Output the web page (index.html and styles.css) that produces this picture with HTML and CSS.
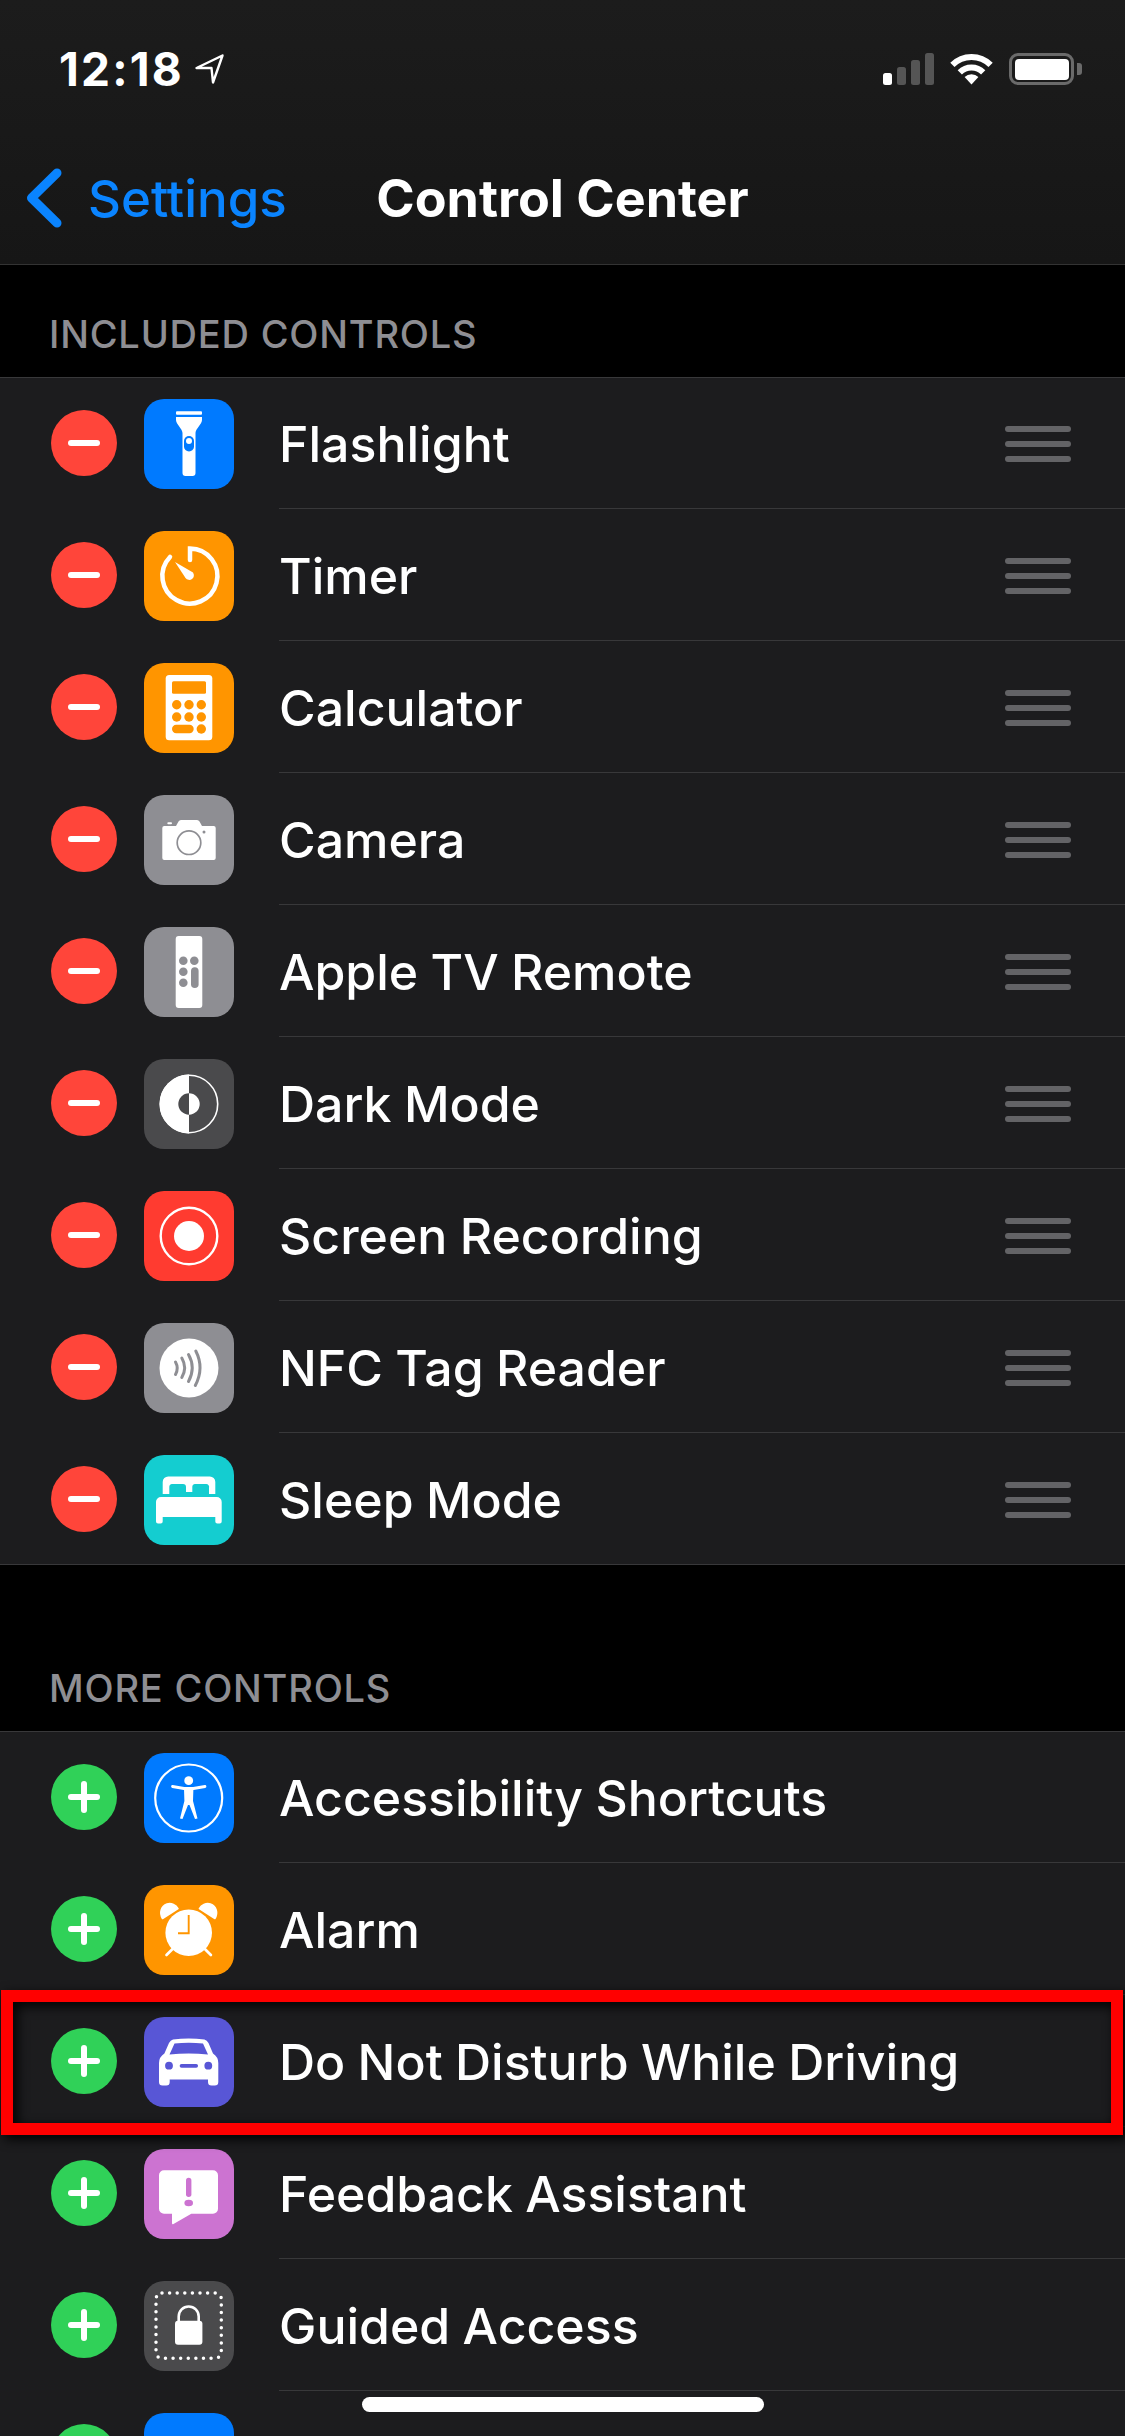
FILE: index.html
```html
<!DOCTYPE html>
<html lang="en">
<head>
    <meta charset="UTF-8">
    <meta name="viewport" content="width=device-width, initial-scale=1.0">
    <title>Control Center</title>
    <link rel="stylesheet" href="styles.css">
</head>
<body>
    <div class="page">
        <header class="top-bar">
            <div class="status-bar">
                <div class="status-left">
                    <span class="time">12:18</span>
                    <svg class="status-arrow" width="32" height="32" viewBox="0 0 32 32"><path d="M28.500 2.500 2.500 15h15l1.500 14.500z" fill="none" stroke="#fff" stroke-width="2.400" stroke-linejoin="round"/></svg>
                </div>
                <div class="status-right">
                    <svg width="51" height="32" viewBox="0 0 51 32">
                        <rect x="0" y="20" width="9" height="12" rx="2.500" fill="#fff"/>
                        <rect x="14" y="14" width="9" height="18" rx="2.500" fill="#555"/>
                        <rect x="28" y="7" width="9" height="25" rx="2.500" fill="#555"/>
                        <rect x="42" y="0" width="9" height="32" rx="2.500" fill="#555"/>
                    </svg>
                    <svg width="45" height="32" viewBox="0 0 45 32">
                        <path d="M3.400 11.900A27 27 0 0 1 41.600 11.900M10.800 19.300A16.500 16.500 0 0 1 34.200 19.300" fill="none" stroke="#fff" stroke-width="6"/>
                        <path d="M22.500 31.500 15.600 24.100A9.700 9.700 0 0 1 29.400 24.100z" fill="#fff"/>
                    </svg>
                    <div class="battery">
                        <div class="battery-body"><div class="battery-fill"></div></div>
                        <div class="battery-nub"></div>
                    </div>
                </div>
            </div>
            <nav class="nav-bar">
                <a class="back-link">
                    <svg width="36" height="60" viewBox="0 0 36 60"><path d="M31 5 5.500 30 31 55" fill="none" stroke="#0a84ff" stroke-width="9" stroke-linecap="round" stroke-linejoin="round"/></svg>
                    <span>Settings</span>
                </a>
                <h1 class="nav-title">Control Center</h1>
            </nav>
        </header>

        <h2 class="section-title">INCLUDED CONTROLS</h2>
        <section class="group">
            <div class="row">
                <div class="round-btn minus"></div>
                <div class="icon blue">
                    <svg viewBox="0 0 90 90">
                        <rect x="32" y="12.300" width="26" height="3.400" rx="1" fill="#fff"/>
                        <path d="M32 18H58V21C58 25 51.500 30 51.500 34V74A3 3 0 0 1 48.500 77H41.500A3 3 0 0 1 38.500 74V34C38.500 30 32 25 32 21z" fill="#fff"/>
                        <rect x="40" y="37" width="10" height="15.500" rx="5" fill="#007aff"/>
                        <circle cx="45" cy="42" r="3" fill="#fff"/>
                    </svg>
                </div>
                <div class="row-body"><span class="row-label">Flashlight</span><div class="handle"><i></i><i></i><i></i></div></div>
            </div>
            <div class="row">
                <div class="round-btn minus"></div>
                <div class="icon orange">
                    <svg viewBox="0 0 90 90">
                        <path d="M46 29V17.500A27.500 27.500 0 1 1 26 26" fill="none" stroke="#fff" stroke-width="4.500" stroke-linecap="round"/>
                        <path d="M31 31 49 41.500A4.500 4.500 0 1 1 41.500 47z" fill="#fff"/>
                    </svg>
                </div>
                <div class="row-body"><span class="row-label">Timer</span><div class="handle"><i></i><i></i><i></i></div></div>
            </div>
            <div class="row">
                <div class="round-btn minus"></div>
                <div class="icon orange">
                    <svg viewBox="0 0 90 90">
                        <rect x="21.700" y="12" width="46.600" height="65.300" rx="3.500" fill="#fff"/>
                        <g fill="#ff9500">
                            <rect x="28" y="18.300" width="34" height="12.400" rx="1.500"/>
                            <circle cx="32.700" cy="41.700" r="4.700"/><circle cx="45" cy="41.700" r="4.700"/><circle cx="57.300" cy="41.700" r="4.700"/>
                            <circle cx="32.700" cy="54" r="4.700"/><circle cx="45" cy="54" r="4.700"/><circle cx="57.300" cy="54" r="4.700"/>
                            <rect x="28" y="61.800" width="21.700" height="8.400" rx="4.200"/><circle cx="57.300" cy="66" r="4.700"/>
                        </g>
                    </svg>
                </div>
                <div class="row-body"><span class="row-label">Calculator</span><div class="handle"><i></i><i></i><i></i></div></div>
            </div>
            <div class="row">
                <div class="round-btn minus"></div>
                <div class="icon gray">
                    <svg viewBox="0 0 90 90">
                        <path d="M20.300 31H32L34.500 26.500Q35.300 25 37 25H53Q54.700 25 55.500 26.500L58 31H69.700A2 2 0 0 1 71.700 33V63A2 2 0 0 1 69.700 65H20.300A2 2 0 0 1 18.300 63V33A2 2 0 0 1 20.300 31z" fill="#fff"/>
                        <rect x="23.300" y="27.300" width="4.700" height="2" rx="1" fill="#fff"/>
                        <circle cx="45" cy="47.700" r="11.800" fill="#fff" stroke="#8e8e93" stroke-width="1.700"/>
                        <circle cx="60" cy="37" r="1.500" fill="#8e8e93"/>
                    </svg>
                </div>
                <div class="row-body"><span class="row-label">Camera</span><div class="handle"><i></i><i></i><i></i></div></div>
            </div>
            <div class="row">
                <div class="round-btn minus"></div>
                <div class="icon gray">
                    <svg viewBox="0 0 90 90">
                        <rect x="31.700" y="9" width="26.600" height="72" rx="3" fill="#fff"/>
                        <g fill="#8e8e93">
                            <circle cx="39.300" cy="33.700" r="4.300"/><circle cx="50.300" cy="33.700" r="4.300"/>
                            <circle cx="39.300" cy="44.700" r="4.300"/><circle cx="39.300" cy="55.700" r="4.300"/>
                            <rect x="47" y="40.300" width="7.600" height="20.700" rx="3.800"/>
                        </g>
                    </svg>
                </div>
                <div class="row-body"><span class="row-label">Apple TV Remote</span><div class="handle"><i></i><i></i><i></i></div></div>
            </div>
            <div class="row">
                <div class="round-btn minus"></div>
                <div class="icon dark">
                    <svg viewBox="0 0 90 90">
                        <path d="M45 15.500A29.500 29.500 0 0 0 45 74.500z" fill="#fff"/>
                        <circle cx="45" cy="45" r="28.700" fill="none" stroke="#fff" stroke-width="1.600"/>
                        <path d="M45 34.300A10.700 10.700 0 0 0 45 55.700z" fill="#4a4a4c"/>
                        <path d="M45 34.300A10.700 10.700 0 0 1 45 55.700z" fill="#fff"/>
                    </svg>
                </div>
                <div class="row-body"><span class="row-label">Dark Mode</span><div class="handle"><i></i><i></i><i></i></div></div>
            </div>
            <div class="row">
                <div class="round-btn minus"></div>
                <div class="icon red">
                    <svg viewBox="0 0 90 90">
                        <circle cx="45" cy="45" r="28.300" fill="none" stroke="#fff" stroke-width="2.400"/>
                        <circle cx="45" cy="45" r="15" fill="#fff"/>
                    </svg>
                </div>
                <div class="row-body"><span class="row-label">Screen Recording</span><div class="handle"><i></i><i></i><i></i></div></div>
            </div>
            <div class="row">
                <div class="round-btn minus"></div>
                <div class="icon gray">
                    <svg viewBox="0 0 90 90">
                        <circle cx="45" cy="45" r="29.500" fill="#fff"/>
                        <path d="M31.500 39Q35 45.300 31.500 51.500M37.800 35Q43.500 44.700 37.800 54.500M44.500 31.500Q52 44.700 44.500 58.500M51.800 28Q60.500 45 51.300 62.500" fill="none" stroke="#8e8e93" stroke-width="3" stroke-linecap="round"/>
                    </svg>
                </div>
                <div class="row-body"><span class="row-label">NFC Tag Reader</span><div class="handle"><i></i><i></i><i></i></div></div>
            </div>
            <div class="row">
                <div class="round-btn minus"></div>
                <div class="icon teal">
                    <svg viewBox="0 0 90 90">
                        <path d="M18.700 39V27A5.500 5.500 0 0 1 24.200 21.500H65.800A5.500 5.500 0 0 1 71.300 27V39H65V33A3 3 0 0 0 62 29H51A3 3 0 0 0 48.300 32V37H42V32A3 3 0 0 0 39 29H28A3 3 0 0 0 25.300 32V39z" fill="#fff"/>
                        <path d="M12 47A5 5 0 0 1 17 42H72.700A5 5 0 0 1 77.700 47V66.500A2 2 0 0 1 75.700 68.500H73.300A2 2 0 0 1 71.300 66.500V62H18.700V66.500A2 2 0 0 1 16.700 68.500H14A2 2 0 0 1 12 66.500z" fill="#fff"/>
                    </svg>
                </div>
                <div class="row-body"><span class="row-label">Sleep Mode</span><div class="handle"><i></i><i></i><i></i></div></div>
            </div>
        </section>

        <h2 class="section-title section-gap">MORE CONTROLS</h2>
        <section class="group">
            <div class="row">
                <div class="round-btn plus"></div>
                <div class="icon blue">
                    <svg viewBox="0 0 90 90">
                        <circle cx="44.700" cy="45" r="33.500" fill="none" stroke="#fff" stroke-width="2.200"/>
                        <circle cx="44.700" cy="27.700" r="4.400" fill="#fff"/>
                        <path d="M28.500 33.500 40 35.500H49.400L61 33.500" fill="none" stroke="#fff" stroke-width="2.800" stroke-linecap="round" stroke-linejoin="round"/>
                        <path d="M40 35.500H49.400L49 48 53.500 65.500 51 66 45.500 52H44L38.500 66 36 65.500 40.400 48z" fill="#fff"/>
                    </svg>
                </div>
                <div class="row-body"><span class="row-label">Accessibility Shortcuts</span></div>
            </div>
            <div class="row">
                <div class="round-btn plus"></div>
                <div class="icon orange">
                    <svg viewBox="0 0 90 90">
                        <path d="M18.500 33.500C15 28 17 21 23 19C27.500 17.700 32 20 34 23.500z" fill="#fff" stroke="#fff" stroke-width="1.500" stroke-linejoin="round"/>
                        <path d="M70.900 33.500C74.400 28 72.400 21 66.400 19C61.900 17.700 57.400 20 55.400 23.500z" fill="#fff" stroke="#fff" stroke-width="1.500" stroke-linejoin="round"/>
                        <circle cx="44.700" cy="47.700" r="23.300" fill="#fff"/>
                        <path d="M44.700 30V48.300H34" fill="none" stroke="#ff9500" stroke-width="1.900"/>
                        <path d="M22.500 70 28.300 64.300M66.900 70 61.100 64.300" fill="none" stroke="#fff" stroke-width="2.700" stroke-linecap="round"/>
                    </svg>
                </div>
                <div class="row-body"><span class="row-label">Alarm</span></div>
            </div>
            <div class="row">
                <div class="round-btn plus"></div>
                <div class="icon indigo">
                    <svg viewBox="0 0 90 90">
                        <path d="M29 22.500Q44.700 20.500 60.400 22.500Q63 23 64.500 26L69 36.500Q74.300 40 74.300 46V65A3.500 3.500 0 0 1 70.800 68.500H67.500A3.500 3.500 0 0 1 64 65V62.500H25.700V65A3.500 3.500 0 0 1 22.200 68.500H18.500A3.500 3.500 0 0 1 15 65V46Q15 40 20.400 36.500L25 26Q26.500 23 29 22.500z" fill="#fff"/>
                        <path d="M30.500 26.500Q44.700 25 59 26.500L64 37.500Q44.700 35.500 25.500 37.500z" fill="#5856d6"/>
                        <circle cx="25" cy="48.700" r="3.900" fill="#5856d6"/>
                        <circle cx="64.300" cy="48.700" r="3.900" fill="#5856d6"/>
                        <rect x="35.700" y="47" width="18.300" height="3.700" rx="1.800" fill="#5856d6"/>
                    </svg>
                </div>
                <div class="row-body"><span class="row-label">Do Not Disturb While Driving</span></div>
                <div class="highlight"></div>
            </div>
            <div class="row">
                <div class="round-btn plus"></div>
                <div class="icon purple">
                    <svg viewBox="0 0 90 90">
                        <path d="M20 21.300H69A5 5 0 0 1 74 26.300V59.700A5 5 0 0 1 69 64.700H47.300L29.500 75Q28 75.800 28 74V64.700H20A5 5 0 0 1 15 59.700V26.300A5 5 0 0 1 20 21.300z" fill="#fff"/>
                        <rect x="42" y="28.700" width="5.400" height="19.300" rx="2.700" fill="#cc73d1"/>
                        <ellipse cx="44.700" cy="54" rx="4.300" ry="3.200" fill="#cc73d1"/>
                    </svg>
                </div>
                <div class="row-body"><span class="row-label">Feedback Assistant</span></div>
            </div>
            <div class="row">
                <div class="round-btn plus"></div>
                <div class="icon dark">
                    <svg viewBox="0 0 90 90">
                        <rect x="12" y="12" width="65.300" height="65.300" rx="6" fill="none" stroke="#fff" stroke-width="3.500" stroke-linecap="round" stroke-dasharray="0 7.600"/>
                        <path d="M34.700 41V35.500A10 10 0 0 1 54.700 35.500V41" fill="none" stroke="#fff" stroke-width="2.600"/>
                        <rect x="31" y="39.700" width="27.400" height="24" rx="3" fill="#fff"/>
                    </svg>
                </div>
                <div class="row-body"><span class="row-label">Guided Access</span></div>
            </div>
            <div class="row">
                <div class="round-btn plus"></div>
                <div class="icon blue">
                    <svg viewBox="0 0 90 90">
                        <path d="M28 38A17.500 17.500 0 0 1 62 38C62 48 52 50 52 60" fill="none" stroke="#fff" stroke-width="3.200" stroke-linecap="round"/>
                    </svg>
                </div>
                <div class="row-body"></div>
            </div>
        </section>

        <div class="home-indicator"></div>
    </div>
</body>
</html>
```

FILE: styles.css
```css
* {
    margin: 0;
    padding: 0;
    box-sizing: border-box;
}

body {
    background-color: #000;
    font-family: 'Inter', 'Liberation Sans', sans-serif;
    color: #fff;
}

.page {
    position: relative;
    width: 1125px;
    height: 2436px;
    overflow: hidden;
}

/* Status bar and navigation */
.top-bar {
    background: linear-gradient(180deg, #1c1c1c 0%, #161616 100%);
    border-bottom: 1px solid #333;
    height: 265px;
}

.status-bar {
    height: 132px;
    display: flex;
    justify-content: space-between;
    padding: 52px 43px 0 59px;
}

.status-left {
    display: flex;
    align-items: flex-start;
    gap: 10px;
}

.time {
    font-size: 46px;
    font-weight: 700;
    line-height: 34px;
    letter-spacing: 2.200px;
}

.status-arrow {
    margin-top: 1px;
}

.status-right {
    display: flex;
    align-items: flex-start;
    gap: 15px;
    padding-top: 1px;
}

.battery {
    display: flex;
    align-items: center;
    gap: 3px;
}

.battery-body {
    width: 65px;
    height: 32px;
    border: 3px solid #6a6a6a;
    border-radius: 9px;
    padding: 2.500px;
}

.battery-fill {
    width: 100%;
    height: 100%;
    background-color: #fff;
    border-radius: 4px;
}

.battery-nub {
    width: 5px;
    height: 12px;
    background-color: #6a6a6a;
    border-radius: 0 3px 3px 0;
}

.nav-bar {
    height: 132px;
    display: grid;
    grid-template-columns: 1fr auto 1fr;
    align-items: center;
}

.back-link {
    display: flex;
    align-items: center;
    gap: 26px;
    padding-left: 26px;
    color: #0a84ff;
    font-size: 51px;
    font-weight: 500;
}

.nav-title {
    font-size: 52px;
    font-weight: 700;
}

/* Grouped list */
.section-title {
    height: 112px;
    padding: 46px 0 0 49px;
    font-size: 38px;
    font-weight: 500;
    line-height: 46px;
    letter-spacing: 0.800px;
    color: #8e8e93;
}

.section-gap {
    margin-top: 54px;
}

.group {
    background-color: #1c1c1e;
    border-top: 1px solid #38383a;
    border-bottom: 1px solid #38383a;
}

.row {
    position: relative;
    height: 132px;
    display: flex;
    align-items: flex-start;
    padding: 22px 0 0 51px;
}

.row:first-child {
    height: 131px;
    padding-top: 21px;
}

.row:last-child {
    height: 131px;
}

.row:last-child .row-body {
    border-bottom: 0;
}

.round-btn {
    position: relative;
    flex: none;
    width: 66px;
    height: 66px;
    margin-top: 11px;
    border-radius: 50%;
}

.round-btn:before, .round-btn:after {
    content: '';
    position: absolute;
    background-color: #fff;
    border-radius: 3px;
}

.round-btn:before {
    left: 17px;
    top: 30px;
    width: 32px;
    height: 6px;
}

.minus {
    background-color: #ff453a;
}

.minus:after {
    display: none;
}

.plus {
    background-color: #30d158;
}

.plus:after {
    left: 30px;
    top: 17px;
    width: 6px;
    height: 32px;
}

.icon {
    flex: none;
    width: 90px;
    height: 90px;
    margin-left: 27px;
    border-radius: 20px;
}

.icon svg {
    display: block;
    width: 90px;
    height: 90px;
}

.blue { background-color: #007aff; }
.orange { background-color: #ff9500; }
.gray { background-color: #8e8e93; }
.dark { background-color: #4a4a4c; }
.red { background-color: #ff3b30; }
.teal { background-color: #14cdd0; }
.indigo { background-color: #5856d6; }
.purple { background-color: #cc73d1; }

.row-body {
    flex: 1;
    align-self: stretch;
    display: flex;
    align-items: center;
    justify-content: space-between;
    margin-left: 45px;
    padding: 0 54px 20px 0;
    border-bottom: 1px solid #38383a;
}

.row-label {
    font-size: 50px;
    font-weight: 500;
    word-spacing: -1px;
}

.handle {
    display: flex;
    flex-direction: column;
    gap: 9px;
}

.handle i {
    display: block;
    width: 66px;
    height: 6px;
    background-color: #636366;
    border-radius: 3px;
}

/* Red annotation drawn over the row */
.highlight {
    position: absolute;
    left: 1px;
    right: 2px;
    top: -5px;
    bottom: -8px;
    border: 12px solid #f00;
    filter: drop-shadow(4px 4px 6px #000);
    z-index: 2;
}

.home-indicator {
    position: absolute;
    left: 362px;
    top: 2397px;
    width: 402px;
    height: 15px;
    background-color: #fff;
    border-radius: 8px;
    z-index: 3;
}
```
